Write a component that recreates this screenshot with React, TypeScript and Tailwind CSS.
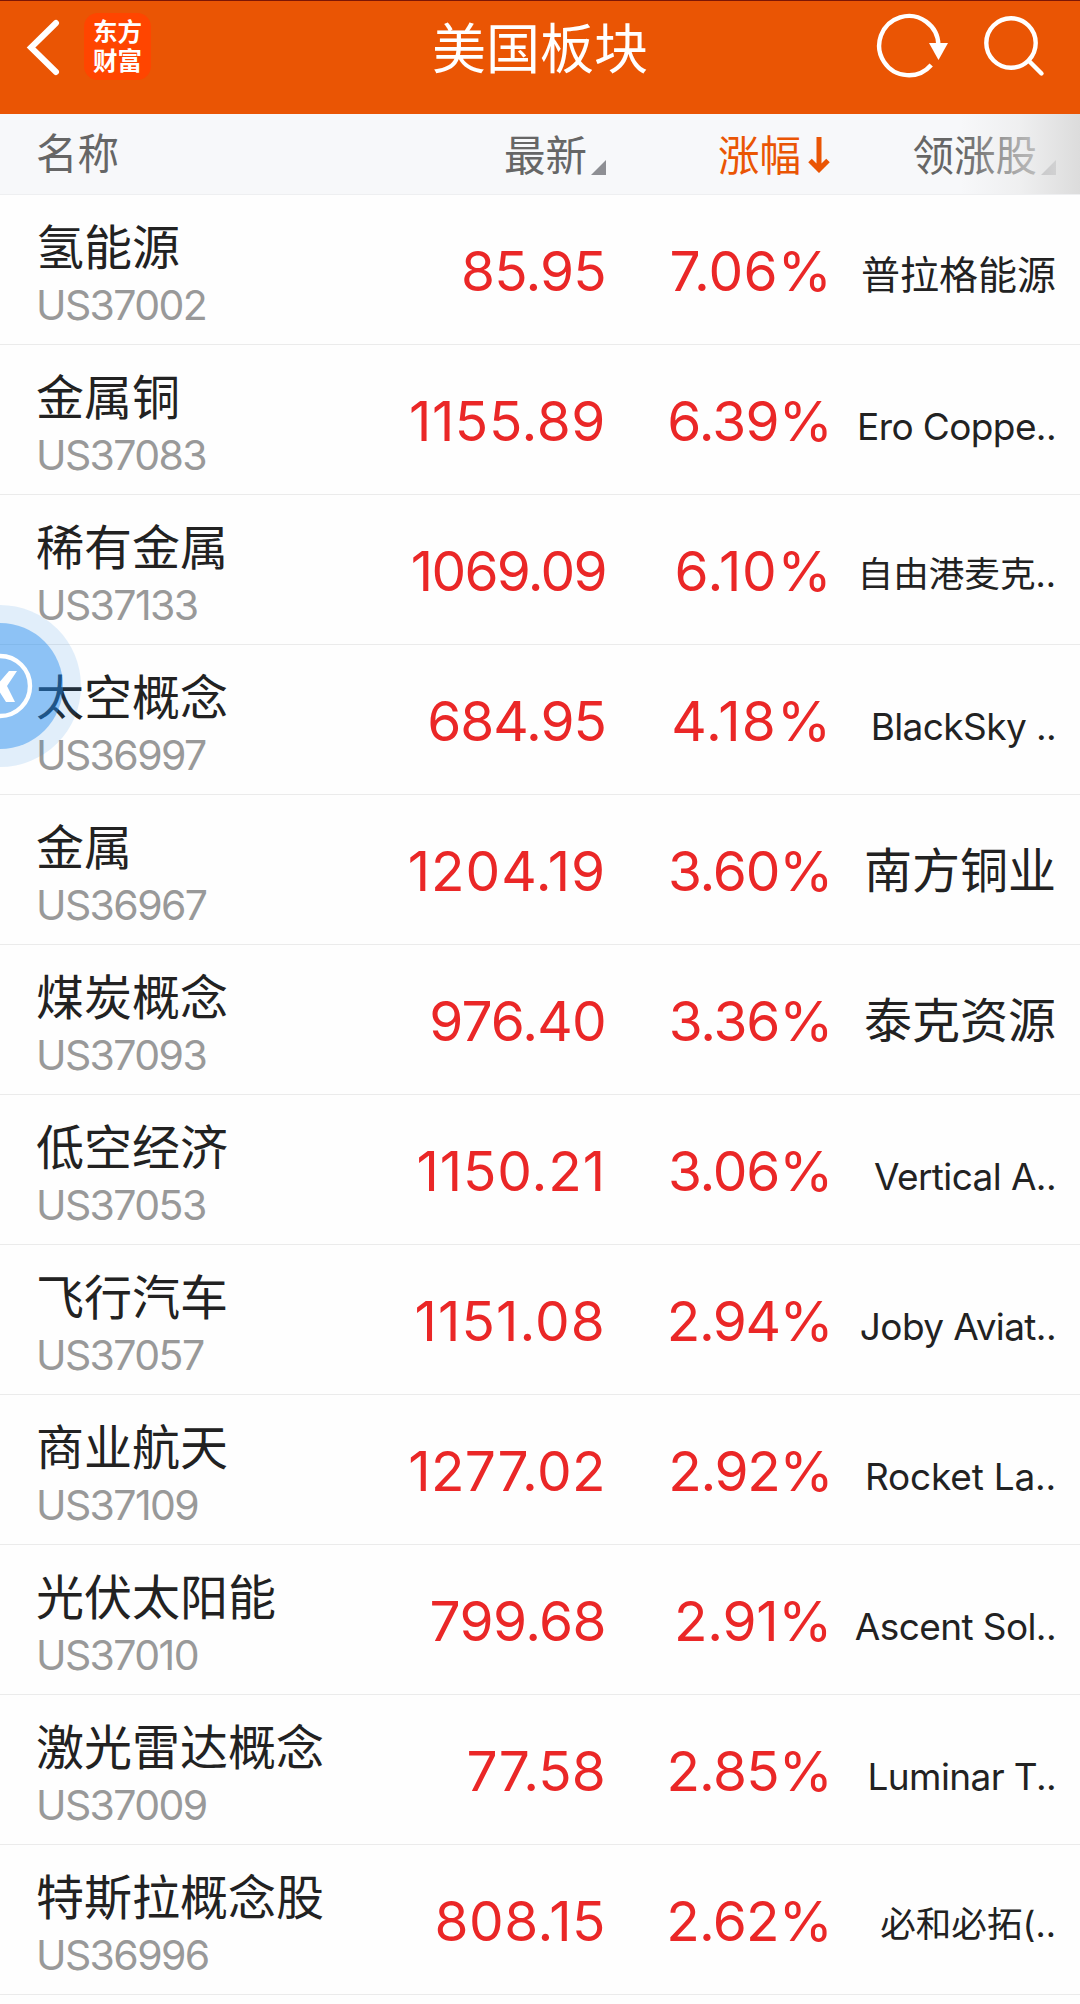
import React from "react";
import { clsx } from "clsx";

interface Sector {
  name: string;
  code: string;
  price: string;
  priceClass: string;
  change: string;
  changeClass: string;
  leader: string;
  leaderClass: string;
}

const LATIN = "text-[37px] tracking-[-0.6px] pt-[15px]";
const CJK = "text-[39px] pt-[11px]";
const CJK_SMALL = "text-[35.6px] pt-[11px]";
const CJK_LARGE = "text-[48px] pt-[3px]";

const sectors: Sector[] = [
  { name: "氢能源", code: "US37002", price: "85.95", priceClass: "tracking-[-0.8px]", change: "7.06%", changeClass: "tracking-[0.2px]", leader: "普拉格能源", leaderClass: CJK },
  { name: "金属铜", code: "US37083", price: "1155.89", priceClass: "tracking-[0.6px]", change: "6.39%", changeClass: "tracking-[-0.8px]", leader: "Ero Coppe..", leaderClass: LATIN },
  { name: "稀有金属", code: "US37133", price: "1069.09", priceClass: "tracking-[-1.7px]", change: "6.10%", changeClass: "tracking-[0.6px]", leader: "自由港麦克..", leaderClass: CJK_SMALL },
  { name: "太空概念", code: "US36997", price: "684.95", priceClass: "tracking-[-1px]", change: "4.18%", changeClass: "tracking-[1.1px]", leader: "BlackSky ..", leaderClass: LATIN },
  { name: "金属", code: "US36967", price: "1204.19", priceClass: "tracking-[0.9px]", change: "3.60%", changeClass: "tracking-[-1.2px]", leader: "南方铜业", leaderClass: CJK_LARGE },
  { name: "煤炭概念", code: "US37093", price: "976.40", priceClass: "tracking-[-0.8px]", change: "3.36%", changeClass: "tracking-[-1.2px]", leader: "泰克资源", leaderClass: CJK_LARGE },
  { name: "低空经济", code: "US37053", price: "1150.21", priceClass: "tracking-[0.9px]", change: "3.06%", changeClass: "tracking-[-1.2px]", leader: "Vertical A..", leaderClass: LATIN },
  { name: "飞行汽车", code: "US37057", price: "1151.08", priceClass: "tracking-[1.1px]", change: "2.94%", changeClass: "tracking-[-1.5px]", leader: "Joby Aviat..", leaderClass: LATIN },
  { name: "商业航天", code: "US37109", price: "1277.02", priceClass: "tracking-[0.4px]", change: "2.92%", changeClass: "tracking-[-1.4px]", leader: "Rocket La..", leaderClass: "text-[37px] tracking-[-0.2px] pt-[15px]" },
  { name: "光伏太阳能", code: "US37010", price: "799.68", priceClass: "tracking-[-0.6px]", change: "2.91%", changeClass: "tracking-[-0.3px]", leader: "Ascent Sol..", leaderClass: LATIN },
  { name: "激光雷达概念", code: "US37009", price: "77.58", priceClass: "tracking-[0.1px]", change: "2.85%", changeClass: "tracking-[-0.8px]", leader: "Luminar T..", leaderClass: LATIN },
  { name: "特斯拉概念股", code: "US36996", price: "808.15", priceClass: "tracking-[0.5px]", change: "2.62%", changeClass: "tracking-[-0.8px]", leader: "必和必拓(..", leaderClass: CJK_SMALL },
];

const SortCorner: React.FC = () => (
  <svg className="ml-[4px] h-[15px] w-[15px] mb-[21px]" viewBox="0 0 15 15">
    <path d="M15 0V15H0Z" fill="#8e8f94" />
  </svg>
);

const TopBar: React.FC = () => (
  <header className="flex h-[114px] items-start justify-between border-t border-[#7d1605] bg-[#ea5504] text-white">
    <div className="flex w-[300px] items-start pl-[26px] pt-[12px]">
      <svg className="mt-[5px] h-[58px] w-[34px]" viewBox="0 0 34 58" fill="none">
        <path d="M30 5L5 29.5L30 54" stroke="currentColor" strokeWidth="6" strokeLinecap="round" />
      </svg>
      <div className="ml-[24px] flex h-[67px] w-[67px] flex-col items-center justify-center rounded-[14px] bg-[#ff4500] text-[24.5px] font-bold leading-[29px]">
        <span>东方</span>
        <span>财富</span>
      </div>
    </div>
    <h1 className="pt-[9px] text-[54px] leading-[80px]">美国板块</h1>
    <div className="flex w-[300px] items-start justify-end pr-[34px] pt-[11px]">
      {/* Refresh */}
      <svg className="h-[68px] w-[74px]" viewBox="0 0 74 68" fill="none">
        <path d="M62.4 33A29.6 29.6 0 1 0 55.2 53" stroke="currentColor" strokeWidth="4.4" />
        <path d="M53 31H72L62.5 48Z" fill="currentColor" />
      </svg>
      {/* Search */}
      <svg className="ml-[34px] mt-[3px] h-[64px] w-[62px]" viewBox="0 0 62 64" fill="none" stroke="currentColor" strokeWidth="4.4">
        <circle cx="27" cy="28" r="24.7" />
        <path d="M45 46L57.5 58.5" strokeLinecap="round" />
      </svg>
    </div>
  </header>
);

const ColumnHeader: React.FC = () => (
  <div className="relative flex h-[81px] items-center border-b border-[#eeeff1] bg-[#f7f8fa] text-[41.5px] leading-[80px] text-[#666]">
    <div className="w-[300px] pb-[1px] pl-[36px]">名称</div>
    <div className="flex w-[306px] items-end justify-end pt-[3px]">
      最新
      <SortCorner />
    </div>
    <div className="flex w-[225px] items-center justify-end pt-[3px] text-[#ea5504]">
      涨幅
      <svg className="ml-[6px] h-[37px] w-[24px]" viewBox="0 0 24 37" fill="none" stroke="currentColor" strokeWidth="5">
        <path d="M12 0V32M3 23.5L12 32.5L21 23.5" />
      </svg>
    </div>
    <div className="flex w-[225px] items-end justify-end pt-[3px]">
      领涨股
      <SortCorner />
    </div>
    {/* Fade hinting at more columns to the right */}
    <div className="absolute right-0 top-0 h-[80px] w-[120px] bg-linear-to-r from-[#f7f8fa]/0 via-[#e8e8e8]/55 to-[#dcdcdc]" />
  </div>
);

const SectorRow: React.FC<{ sector: Sector }> = ({ sector }) => (
  <div className="flex h-[150px] items-center border-b border-[#ebebeb]">
    <div className="w-[345px] pl-[36px] pt-[11px]">
      <div className="text-[48px] leading-[60px] text-[#222]">{sector.name}</div>
      <div className="text-[41px] leading-[54px] tracking-[-1.6px] text-[#999]">{sector.code}</div>
    </div>
    <div className={clsx("w-[261px] pt-[3px] text-right text-[55px] text-[#ea2727]", sector.priceClass)}>{sector.price}</div>
    <div className={clsx("w-[226px] pt-[3px] text-right text-[55px] text-[#ea2727]", sector.changeClass)}>{sector.change}</div>
    <div className={clsx("w-[224px] whitespace-nowrap text-right text-[#222]", sector.leaderClass)}>{sector.leader}</div>
  </div>
);

const FloatingBackButton: React.FC = () => (
  <div className="absolute left-[-81px] top-[605px] flex h-[162px] w-[162px] items-center justify-center rounded-full bg-[#1e80e0]/13">
    <div className="flex h-[126px] w-[126px] items-center justify-center rounded-full bg-[#1e88ee]/43">
      <svg className="h-[66px] w-[66px]" viewBox="0 0 66 66" fill="none">
        <circle cx="33" cy="33" r="30" stroke="#fff" strokeWidth="4.4" />
        <path d="M42 18H50L40 33L48 49H39L29 33Z" fill="#fff" />
      </svg>
    </div>
  </div>
);

export default function App() {
  return (
    <div className="relative h-[2004px] w-[1080px] overflow-hidden bg-[#fefefe] font-['Inter','Noto_Sans_CJK_SC',sans-serif]">
      <TopBar />
      <ColumnHeader />
      {sectors.map((sector) => (
        <SectorRow key={sector.code} sector={sector} />
      ))}
      <FloatingBackButton />
    </div>
  );
}
